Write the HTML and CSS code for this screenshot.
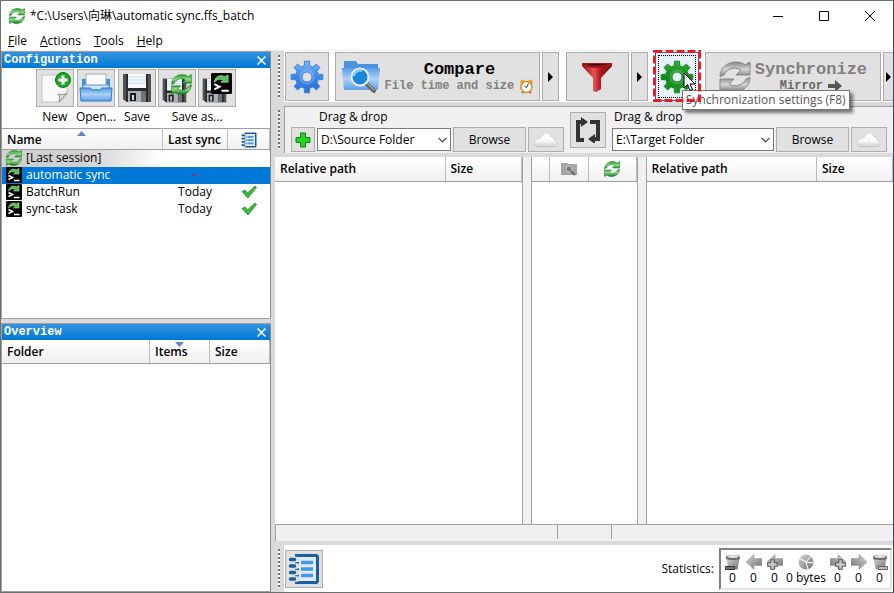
FILE: index.html
```html
<!DOCTYPE html>
<html lang="en">
<head>
    <meta charset="UTF-8">
    <meta name="viewport" content="width=device-width, initial-scale=1.0">
    <title>automatic sync.ffs_batch</title>
    <link rel="stylesheet" href="styles.css">
</head>
<body>
    <!-- shared icons -->
    <svg class="defs" aria-hidden="true">
        <defs>
            <linearGradient id="g-green" x1="0" y1="0" x2="0" y2="1">
                <stop offset="0" stop-color="#2f9a35"/><stop offset=".5" stop-color="#8fdc7c"/><stop offset="1" stop-color="#0b6f1a"/>
            </linearGradient>
            <linearGradient id="g-grey" x1="0" y1="0" x2="0" y2="1">
                <stop offset="0" stop-color="#858585"/><stop offset=".5" stop-color="#d5d5d5"/><stop offset="1" stop-color="#777"/>
            </linearGradient>
            <linearGradient id="g-blue" x1="0" y1="0" x2="0" y2="1">
                <stop offset="0" stop-color="#7db5f7"/><stop offset=".5" stop-color="#3d86e6"/><stop offset="1" stop-color="#2a6fd6"/>
            </linearGradient>
            <linearGradient id="g-gear" x1="0" y1="0" x2="0" y2="1">
                <stop offset="0" stop-color="#2fae35"/><stop offset=".5" stop-color="#128a18"/><stop offset="1" stop-color="#1b9522"/>
            </linearGradient>
            <linearGradient id="g-red" x1="0" y1="0" x2="1" y2="0">
                <stop offset="0" stop-color="#8e0f12"/><stop offset=".4" stop-color="#e45557"/><stop offset=".6" stop-color="#b5181c"/><stop offset="1" stop-color="#6d0a0c"/>
            </linearGradient>
            <linearGradient id="g-folder" x1="0" y1="0" x2="0" y2="1">
                <stop offset="0" stop-color="#5a9be0"/><stop offset=".5" stop-color="#a9d2fb"/><stop offset="1" stop-color="#5e9fe8"/>
            </linearGradient>
            <linearGradient id="g-cloud" x1="0" y1="0" x2="0" y2="1">
                <stop offset="0" stop-color="#fff"/><stop offset=".6" stop-color="#f8f8f8"/><stop offset="1" stop-color="#c9c9c9"/>
            </linearGradient>
            <linearGradient id="g-metal" x1="0" y1="0" x2="1" y2="1">
                <stop offset="0" stop-color="#d6d6d6"/><stop offset="1" stop-color="#707070"/>
            </linearGradient>
        </defs>
        <symbol id="i-sync" viewBox="0 0 32 32">
            <path d="M1 16C1 6 9 1 17 1c4 0 7 1 9 3l5-3v13H17l5-5C16 5 7 8 5 14c-1 0-3 1-4 2z" stroke-width="1"/>
            <path d="M31 16c0 10-8 15-16 15-4 0-7-1-9-3l-5 3V18h14l-5 5c6 4 15 1 17-5 1 0 3-1 4-2z" stroke-width="1"/>
        </symbol>
        <symbol id="i-gear" viewBox="-17 -17 34 34">
            <path fill-rule="evenodd" stroke-linejoin="round" stroke-width="1" d="M-2.800-11.200L-2.500-15.800 2.500-15.800 2.800-11.200 5.900-9.900 9.400-12.900 12.900-9.400 9.900-5.900 11.200-2.800 15.800-2.500 15.800 2.500 11.200 2.800 9.900 5.900 12.900 9.400 9.400 12.900 5.900 9.900 2.800 11.200 2.500 15.800 -2.500 15.800 -2.800 11.200 -5.900 9.900 -9.400 12.900 -12.900 9.400 -9.900 5.900 -11.200 2.800 -15.800 2.500 -15.800-2.500 -11.200-2.800 -9.900-5.900 -12.900-9.400 -9.400-12.900 -5.900-9.900zM0-5A5 5 0 1 0 0 5 5 5 0 1 0 0-5z"/>
            <circle r="6.500" fill="none" stroke="#fff" stroke-opacity=".2" stroke-width="2"/>
        </symbol>
        <symbol id="i-floppy" viewBox="0 0 30 30">
            <path d="M1 1h28v28H5l-4-3z" fill="#2a2b2d"/>
            <path d="M1 1h3v26l-3-1zM26 1h3v28h-3z" fill="#505256"/>
            <path d="M6 1h18v14H6z" fill="#f6f9fd"/>
            <path d="M6 4h18M6 7h18M6 10h18" stroke="#c3d6ee" stroke-width="1"/>
            <path d="M6 18h18v11H6z" fill="#aeb1b5"/>
            <path d="M8 20h6v8H8z" fill="#1b1b1b"/><path d="M10 22h2v5h-2z" fill="#ddd"/>
            <path d="M19 18h5v11h-5z" fill="#6f7276"/>
        </symbol>
        <symbol id="i-batch" viewBox="0 0 16 16">
            <rect width="16" height="16" rx="1" fill="#050505"/>
            <path d="M2.500 7C3 2.500 7 1 10.500 2.800L13 1.500V7H7.500l2-1.600C7 4 4.500 4.800 2.500 7z" fill="#4fbf55" stroke="#b5ecae" stroke-width=".5"/>
            <path d="M2.500 8.500l4 2-4 2M8 13.500h5.500" fill="none" stroke="#fff" stroke-width="1.500"/>
        </symbol>
        <symbol id="i-log" viewBox="0 0 32 32">
            <path d="M7 1h22l2 2v26l-2 2H7z" fill="#185f9f"/>
            <path d="M11 4h17v24H11z" fill="#e4eaf2"/>
            <path d="M13 9.500h12M13 16h12M13 22.500h12" stroke="#4298ea" stroke-width="3.500"/>
            <path d="M4 6.500h5M4 13h5M4 19.500h5M4 26h5" stroke="#e1e1e1" stroke-width="5.500" stroke-linecap="round"/>
            <path d="M2.500 6.500h4M2.500 13h4M2.500 19.500h4M2.500 26h4" stroke="#185f9f" stroke-width="3.500" stroke-linecap="round"/>
        </symbol>
        <symbol id="i-cloud" viewBox="0 0 24 16">
            <path d="M5 15a4 4 0 0 1-1-8c1-1 2-1 3-1 1-6 9-7 10-1 2 0 3 1 3 3 4 1 4 7 0 7z" fill="url(#g-cloud)" stroke="#c6c6c6" stroke-width=".6"/>
        </symbol>
        <symbol id="i-check" viewBox="0 0 16 14">
            <path d="M1 6.500l3-1.500 2.500 3L14 1l1.500 1.500L7 13z" fill="#3fb83f" stroke="#1f8a2a" stroke-width=".8"/>
        </symbol>
        <symbol id="i-chevron" viewBox="0 0 9 6">
            <path d="M.5.800l4 4 4-4" fill="none" stroke="#444" stroke-width="1.200"/>
        </symbol>
        <symbol id="i-close" viewBox="0 0 9 9">
            <path d="M.5.500l8 8m0-8l-8 8" fill="none" stroke="currentColor" stroke-width="1.500"/>
        </symbol>
        <symbol id="i-arrow" viewBox="0 0 16 16">
            <path d="M16 4.500H8V.5L0 8l8 7.500v-4h8z" fill="url(#g-metal)" stroke="#999" stroke-width=".6"/>
        </symbol>
        <symbol id="i-plus" viewBox="0 0 16 16">
            <path d="M5.500 1h5v4.500H15v5h-4.500V15h-5v-4.500H1v-5h4.500z"/>
        </symbol>
        <symbol id="i-bin" viewBox="0 0 16 16">
            <path d="M1.500 4h13l-2 11.500h-9z" fill="url(#g-metal)"/>
            <path d="M1 2.500C1 .5 15 .5 15 2.500v2c0 2-14 2-14 0z" fill="#6e6e6e"/>
            <ellipse cx="8" cy="2.500" rx="6" ry="1.500" fill="#e6e6e6"/>
        </symbol>
    </svg>

    <div class="window">
        <header class="titlebar">
            <svg class="icon-16 green"><use href="#i-sync"/></svg>
            <h1>*C:\Users\向琳\automatic sync.ffs_batch</h1>
            <div class="window-btns">
                <button aria-label="Minimize"><svg width="10" height="10"><path d="M0 5.500h10" stroke="#000"/></svg></button>
                <button aria-label="Maximize"><svg width="10" height="10"><path d="M.5.500h9v9h-9z" fill="none" stroke="#000"/></svg></button>
                <button aria-label="Close"><svg width="10" height="10"><path d="M0 0l10 10M10 0L0 10" stroke="#000"/></svg></button>
            </div>
        </header>

        <nav class="menubar">
            <button><u>F</u>ile</button>
            <button><u>A</u>ctions</button>
            <button><u>T</u>ools</button>
            <button><u>H</u>elp</button>
        </nav>

        <div class="workspace">
            <aside class="sidebar">
                <section class="panel config">
                    <div class="caption">
                        <h2>Configuration</h2>
                        <button aria-label="Close configuration"><svg width="9" height="9"><use href="#i-close"/></svg></button>
                    </div>
                    <div class="file-tools">
                        <div class="tool">
                            <button class="btn" id="new" aria-label="New">
                                <svg width="32" height="32" viewBox="0 0 32 32">
                                    <path d="M3 3h25v20l-8 7H3z" fill="#fafafa" stroke="#c4c4c4"/>
                                    <path d="M28 21l-8 9c1-4 1-6-1-8 3 1 6 1 9-1z" fill="#ddd" stroke="#888"/>
                                    <circle cx="24" cy="8" r="7.500" fill="#22a52a" stroke="#0d7a15"/>
                                    <path d="M24 3.500v9M19.500 8h9" stroke="#fff" stroke-width="3"/>
                                </svg>
                            </button>
                            <label for="new">New</label>
                        </div>
                        <div class="tool">
                            <button class="btn" id="open" aria-label="Open">
                                <svg width="34" height="32" viewBox="0 0 34 32">
                                    <path d="M3 7h28v12H3z" fill="#3b8be0"/>
                                    <path d="M7 2h20v16H7z" fill="#fafafa" stroke="#aaa"/>
                                    <path d="M4 13h26v5H4z" fill="#cfe3f8" stroke="#5a9be0"/>
                                    <path d="M1 16h10l2 2h8l2-2h10l-1 13H2z" fill="url(#g-folder)" stroke="#3379cc"/>
                                </svg>
                            </button>
                            <label for="open">Open...</label>
                        </div>
                        <div class="tool">
                            <button class="btn" id="save" aria-label="Save"><svg width="30" height="30"><use href="#i-floppy"/></svg></button>
                            <label for="save">Save</label>
                        </div>
                        <div class="tool">
                            <div class="tool-pair">
                                <button class="btn" id="save-as" aria-label="Save as">
                                    <svg width="32" height="32" viewBox="0 0 32 32">
                                        <use href="#i-floppy" x="1" y="6" width="25" height="25"/>
                                        <use href="#i-sync" class="green" x="10" y="2" width="21" height="21"/>
                                    </svg>
                                </button>
                                <button class="btn" aria-label="Save as batch job">
                                    <svg width="32" height="32" viewBox="0 0 32 32">
                                        <use href="#i-floppy" x="1" y="6" width="25" height="25"/>
                                        <use href="#i-batch" x="10" y="1" width="21" height="21"/>
                                    </svg>
                                </button>
                            </div>
                            <label for="save-as">Save as...</label>
                        </div>
                    </div>
                    <table class="grid config-list">
                        <thead>
                            <tr>
                                <th>Name<svg class="sort" width="9" height="5"><path d="M0 5l4.500-5L9 5z" fill="#5f7fd0"/></svg></th>
                                <th class="col-sync">Last sync</th>
                                <th class="col-log"><svg class="icon-16"><use href="#i-log"/></svg></th>
                            </tr>
                        </thead>
                        <tbody>
                            <tr class="session">
                                <td><span class="cell"><svg class="icon-16 green"><use href="#i-sync"/></svg>[Last session]</span></td><td></td><td></td>
                            </tr>
                            <tr class="selected">
                                <td><span class="cell"><svg class="icon-16"><use href="#i-batch"/></svg>automatic sync</span></td><td><span class="dash">–</span></td><td></td>
                            </tr>
                            <tr>
                                <td><span class="cell"><svg class="icon-16"><use href="#i-batch"/></svg>BatchRun</span></td><td>Today</td><td><svg class="check"><use href="#i-check"/></svg></td>
                            </tr>
                            <tr>
                                <td><span class="cell"><svg class="icon-16"><use href="#i-batch"/></svg>sync-task</span></td><td>Today</td><td><svg class="check"><use href="#i-check"/></svg></td>
                            </tr>
                        </tbody>
                    </table>
                </section>

                <section class="panel overview">
                    <div class="caption">
                        <h2>Overview</h2>
                        <button aria-label="Close overview"><svg width="9" height="9"><use href="#i-close"/></svg></button>
                    </div>
                    <table class="grid">
                        <thead>
                            <tr>
                                <th>Folder</th>
                                <th class="col-60">Items<svg class="sort" width="9" height="5"><path d="M0 0l4.500 5L9 0z" fill="#5f7fd0"/></svg></th>
                                <th class="col-60">Size</th>
                            </tr>
                        </thead>
                    </table>
                </section>
            </aside>

            <main class="main">
                <div class="dock">
                    <div class="grip"></div>
                    <div class="toolbar">
                        <button class="btn square" aria-label="Comparison settings">
                            <svg width="34" height="34" fill="url(#g-blue)" stroke="#3f82d8"><use href="#i-gear"/></svg>
                        </button>
                        <button class="btn action compare">
                            <svg width="40" height="34" viewBox="0 0 40 34">
                                <path d="M3 4V1h12l2 3h20v10H3z" fill="#4d92dc"/>
                                <path d="M1 8h38l-2 22H3z" fill="url(#g-folder)"/>
                                <path d="M25 23l8 8" stroke="#666" stroke-width="4" stroke-linecap="round"/>
                                <path d="M26 23l7 7" stroke="#ccc" stroke-width="1"/>
                                <circle cx="19" cy="17" r="8.500" fill="#1c86dc" stroke="#e8eef4" stroke-width="2"/>
                                <path d="M13 16a6 6 0 0 1 8-5" stroke="#8fd0ff" stroke-width="2" fill="none"/>
                            </svg>
                            <span class="action-text">
                                <span class="action-title">Compare</span>
                                <span class="action-sub">File time and size
                                    <svg width="15" height="16" viewBox="0 0 15 16">
                                        <circle cx="3.500" cy="4" r="2.500" fill="#e8a93a"/><circle cx="11.500" cy="4" r="2.500" fill="#e8a93a"/>
                                        <path d="M3 15l2-2M12 15l-2-2" stroke="#a8672a" stroke-width="2"/>
                                        <circle cx="7.500" cy="9" r="5.500" fill="#fff" stroke="#d8902c" stroke-width="1.500"/>
                                        <path d="M9.500 5.500l-2 4-2-1.500" stroke="#333" fill="none"/>
                                    </svg>
                                </span>
                            </span>
                        </button>
                        <button class="btn drop" aria-label="Comparison variants"><svg width="5" height="10"><path d="M0 0l5 5-5 5z"/></svg></button>
                        <button class="btn filter" aria-label="Filter">
                            <svg width="30" height="30" viewBox="0 0 30 30">
                                <path d="M0 1v3l11 12v13l3 1 5-3V16L30 4V1z" fill="url(#g-red)"/>
                                <path d="M0 1h30v2c-6 4-24 4-30 0z" fill="#a3171b"/>
                                <path d="M4 2h22c-5 2-17 2-22 0z" fill="#4d0506"/>
                            </svg>
                        </button>
                        <button class="btn drop" aria-label="Filter options"><svg width="5" height="10"><path d="M0 0l5 5-5 5z"/></svg></button>
                        <div class="sync-settings">
                            <button class="btn square hot" aria-describedby="tip" aria-label="Synchronization settings">
                                <svg width="34" height="34" fill="url(#g-gear)" stroke="#158a1b"><use href="#i-gear"/></svg>
                            </button>
                            <div class="tooltip" id="tip" role="tooltip">Synchronization settings (F8)</div>
                            <svg class="highlight" width="48" height="52"><path d="M1.500 1.500h45v49h-45z" fill="none" stroke="#ed1c24" stroke-width="3" stroke-dasharray="8 3"/></svg>
                            <svg class="cursor" width="13" height="20" viewBox="0 0 13 20"><path d="M1 1v15l3.500-3.500L7 18.500l2.500-1L7 12h5z" fill="#fff" stroke="#000"/></svg>
                        </div>
                        <button class="btn action sync" disabled>
                            <svg class="grey" width="32" height="32"><use href="#i-sync"/></svg>
                            <span class="action-text">
                                <span class="action-title">Synchronize</span>
                                <span class="action-sub">Mirror
                                    <svg width="14" height="12" viewBox="0 0 14 12"><path d="M0 4h7V0l7 6-7 6V8H0z" fill="#555"/></svg>
                                </span>
                            </span>
                        </button>
                        <button class="btn drop last" aria-label="Synchronization variants"><svg width="5" height="10"><path d="M0 0l5 5-5 5z"/></svg></button>
                    </div>
                </div>

                <div class="dock">
                    <div class="grip"></div>
                    <div class="folders">
                        <div class="side">
                            <label for="left-path">Drag &amp; drop</label>
                            <div class="path">
                                <button class="btn add" aria-label="Add folder pair">
                                    <svg width="16" height="16" fill="#27d321" stroke="#15801a"><use href="#i-plus"/></svg>
                                </button>
                                <div class="combo">
                                    <select id="left-path"><option>D:\Source Folder</option></select>
                                    <svg width="9" height="6"><use href="#i-chevron"/></svg>
                                </div>
                                <button class="btn browse">Browse</button>
                                <button class="btn cloud" aria-label="Online storage"><svg width="24" height="16"><use href="#i-cloud"/></svg></button>
                            </div>
                        </div>
                        <button class="btn swap" aria-label="Swap sides">
                            <svg width="26" height="26" viewBox="0 0 26 26" fill="none" stroke="#333" stroke-width="4">
                                <path d="M9 23H3V5h4M15 5h8v17h-4"/>
                                <path d="M6 0l7 5-7 5zM20 17l-7 5 7 5z" fill="#333" stroke="none"/>
                            </svg>
                        </button>
                        <div class="side right">
                            <label for="right-path">Drag &amp; drop</label>
                            <div class="path">
                                <div class="combo">
                                    <select id="right-path"><option>E:\Target Folder</option></select>
                                    <svg width="9" height="6"><use href="#i-chevron"/></svg>
                                </div>
                                <button class="btn browse">Browse</button>
                                <button class="btn cloud" aria-label="Online storage"><svg width="24" height="16"><use href="#i-cloud"/></svg></button>
                            </div>
                        </div>
                    </div>
                </div>

                <div class="grids">
                    <div class="pane">
                        <table class="grid">
                            <thead><tr><th>Relative path</th><th class="col-size">Size</th></tr></thead>
                        </table>
                    </div>
                    <div class="pane center">
                        <table class="grid">
                            <thead>
                                <tr>
                                    <th class="col-check"></th>
                                    <th class="col-cat">
                                        <svg width="16" height="14" viewBox="0 0 16 14"><path d="M0 1h6l1 1h9v11H0z" fill="#a5a5a5"/><circle cx="8" cy="7" r="3" fill="#777" stroke="#ccc"/><path d="M10 9l4 4" stroke="#666" stroke-width="2"/></svg>
                                    </th>
                                    <th class="col-act"><svg class="icon-16 green"><use href="#i-sync"/></svg></th>
                                </tr>
                            </thead>
                        </table>
                    </div>
                    <div class="pane">
                        <table class="grid">
                            <thead><tr><th>Relative path</th><th class="col-size">Size</th></tr></thead>
                        </table>
                    </div>
                </div>
                <div class="statusbar"><span></span><span></span><span></span></div>

                <div class="dock bottom">
                    <div class="grip"></div>
                    <div class="footer">
                        <button class="btn log" aria-label="Show log"><svg width="32" height="32"><use href="#i-log"/></svg></button>
                        <span class="stats-label">Statistics:</span>
                        <ul class="stats">
                            <li><svg class="icon-16"><use href="#i-bin"/><path d="M.5 12.500h9v3h-9z" fill="#777" stroke="#333"/></svg>0</li>
                            <li><svg class="icon-16"><use href="#i-arrow"/></svg>0</li>
                            <li><svg class="icon-16"><use href="#i-arrow"/><use href="#i-plus" width="11" height="11" y="5" fill="#ccc" stroke="#555" stroke-width="1.500"/></svg>0</li>
                            <li class="bytes"><svg class="icon-16" viewBox="0 0 16 16"><circle cx="8" cy="8" r="7.500" fill="url(#g-metal)"/><path d="M1 4l7 4 5-6M8 8l2 7M8 8l7 1" stroke="#fff" fill="none"/></svg>0 bytes</li>
                            <li><svg class="icon-16" viewBox="0 0 16 16"><use href="#i-arrow" width="16" height="16" transform="matrix(-1 0 0 1 16 0)"/><use href="#i-plus" width="11" height="11" x="5" y="5" fill="#ccc" stroke="#555" stroke-width="1.500"/></svg>0</li>
                            <li><svg class="icon-16" viewBox="0 0 16 16"><use href="#i-arrow" width="16" height="16" transform="matrix(-1 0 0 1 16 0)"/></svg>0</li>
                            <li><svg class="icon-16"><use href="#i-bin"/><path d="M6.500 12.500h9v3h-9z" fill="#bbb" stroke="#666"/></svg>0</li>
                        </ul>
                    </div>
                </div>
            </main>
        </div>
    </div>
</body>
</html>
```
FILE: styles.css
```css
:root {
    --line: #a0a0a0;
    --frame: #dadada;
    --face: #e1e1e1;
    --blue: #0078d7;
}

* {
    box-sizing: border-box;
}

body {
    margin: 0;
    font: 12px/16px "Open Sans", "Noto Sans CJK SC", sans-serif;
    color: #000;
    background: #fff;
}

button, select {
    font: inherit;
    color: inherit;
    padding: 0;
    margin: 0;
}

svg {
    display: block;
    flex: none;
}

h1, h2 {
    margin: 0;
    font: inherit;
}

.defs {
    position: absolute;
    width: 0;
    height: 0;
}

.icon-16 {
    width: 16px;
    height: 16px;
}

.green {
    fill: url(#g-green);
    stroke: #15802a;
}

.grey {
    fill: url(#g-grey);
    stroke: #888;
}

.window {
    display: flex;
    flex-direction: column;
    height: 100vh;
    border: 1px solid #6b7074;
    border-right-color: #34495a;
    overflow: hidden;
}

/* title and menu */
.titlebar {
    display: flex;
    align-items: center;
    height: 30px;
    padding-left: 8px;
    gap: 5px;
}

.titlebar h1 {
    flex: 1;
}

.window-btns {
    display: flex;
}

.window-btns button {
    display: flex;
    justify-content: center;
    align-items: center;
    width: 46px;
    height: 28px;
    border: 0;
    background: none;
}

.menubar {
    display: flex;
    height: 20px;
    padding-left: 7px;
    gap: 13px;
    border-bottom: 1px solid #f0f0f0;
}

.menubar button {
    border: 0;
    background: none;
}

.workspace {
    flex: 1;
    display: flex;
    gap: 4px;
    min-height: 0;
    background: var(--frame);
}

/* left panels */
.sidebar {
    display: flex;
    flex-direction: column;
    gap: 4px;
    width: 270px;
    flex: none;
}

.panel {
    background: #fff;
    border: 1px solid var(--line);
    border-right-color: #8c8c8c;
}

.config {
    height: 268px;
}

.overview {
    flex: 1;
}

.caption {
    display: flex;
    justify-content: space-between;
    align-items: center;
    height: 16px;
    padding: 0 4px 0 2px;
    color: #fff;
    background: linear-gradient(#3393df, var(--blue));
}

.caption h2 {
    font: bold 12px/16px "Liberation Mono", monospace;
}

.caption button {
    border: 0;
    background: none;
    color: #fff;
}

.btn {
    display: flex;
    justify-content: center;
    align-items: center;
    flex: none;
    border: 1px solid #adadad;
    background: var(--face);
}

.file-tools {
    display: flex;
    justify-content: center;
    gap: 2px;
    height: 60px;
    padding-top: 1px;
}

.tool {
    display: flex;
    flex-direction: column;
    align-items: center;
    gap: 2px;
}

.tool .btn {
    min-width: 38px;
    height: 38px;
}

.tool-pair {
    display: flex;
    gap: 2px;
}

/* tables */
.grid {
    width: 100%;
    table-layout: fixed;
    border-collapse: collapse;
}

.grid th {
    position: relative;
    height: 23px;
    padding: 1px 5px 0;
    text-align: left;
    font-weight: 600;
    background: linear-gradient(#fff, #f0f0f0);
    border-right: 1px solid #bcbcbc;
    border-bottom: 1px solid var(--line);
}

.grid td {
    height: 17px;
    padding: 0;
    line-height: 16px;
    text-align: center;
}

.grid td svg, .grid th > svg {
    margin: 0 auto;
}

.grid .sort {
    position: absolute;
    top: 2px;
    left: 50%;
    margin-left: -5px;
}

.config-list {
    border-top: 1px solid var(--line);
}

.config-list th {
    height: 21px;
}

.col-sync {
    width: 65px;
}

.col-log {
    width: 42px;
}

.col-60 {
    width: 60px;
}

.cell {
    display: flex;
    align-items: center;
    gap: 4px;
    padding-left: 4px;
}

.grid .cell svg {
    margin: 0;
}

.check {
    width: 16px;
    height: 14px;
}

.session td:first-child {
    background: linear-gradient(to right, #d0d0d0 50%, #fff);
}

.selected {
    color: #fff;
    background: var(--blue);
}

.dash {
    color: #e0202c;
}

/* right side */
.main {
    flex: 1;
    display: flex;
    flex-direction: column;
    min-width: 0;
}

.dock {
    display: flex;
    margin-bottom: 4px;
}

.grip {
    width: 9px;
    flex: none;
    margin: 4px 0;
    background: repeating-linear-gradient(#707070 0 2px, #fff 2px 4px) 3px 0 / 2px 100% no-repeat;
}

.toolbar {
    flex: 1;
    display: flex;
    height: 51px;
    padding: 1px 0 1px 1px;
    gap: 2px;
    min-width: 0;
    background: #fff;
}

.square {
    width: 44px;
    height: 49px;
}

.action {
    display: flex;
    gap: 4px;
    min-width: 0;
}

.compare {
    flex: 205;
    margin-left: 4px;
}

.sync {
    flex: 176;
    margin-left: 4px;
    color: #808080;
}

.action-text {
    display: flex;
    flex-direction: column;
    align-items: center;
}

.action-title {
    font: bold 17px/18px "Liberation Mono", monospace;
}

.action-sub {
    display: flex;
    align-items: center;
    gap: 5px;
    font: bold 12px/14px "Liberation Mono", monospace;
    color: #808080;
}

.sync .action-sub {
    color: #666;
}

.action-sub svg {
    margin: -1px 0;
}

.drop {
    width: 17px;
}

.drop.last {
    width: 10px;
    border-right: 0;
}

.filter {
    width: 63px;
    margin-left: 5px;
}

.sync-settings {
    position: relative;
    margin-left: 5px;
}

.hot {
    border-color: var(--blue);
    background: #e5f1fb;
    outline: 1px dotted #000;
    outline-offset: -4px;
}

.highlight {
    position: absolute;
    top: -2px;
    left: -2px;
    z-index: 3;
}

.cursor {
    position: absolute;
    top: 20px;
    left: 28px;
    z-index: 4;
}

.tooltip {
    position: absolute;
    top: 38px;
    left: 27px;
    z-index: 2;
    padding: 1px 3px;
    white-space: nowrap;
    color: #575757;
    background: #fff;
    border: 1px solid #767676;
    box-shadow: 3px 3px 3px rgba(0, 0, 0, 0.5);
}

.folders {
    flex: 1;
    display: flex;
    align-items: flex-start;
    gap: 6px;
    height: 47px;
    padding: 2px 6px 0 6px;
    min-width: 0;
    background: #f0f0f0;
    border: 1px solid var(--line);
    border-width: 1px 0 0 1px;
}

.side {
    flex: 272;
    min-width: 0;
}

.side label {
    display: block;
    padding-left: 28px;
}

.side.right {
    flex: 274;
}

.right label {
    padding-left: 2px;
}

.path {
    display: flex;
    gap: 2px;
    height: 25px;
    margin-top: 2px;
}

.add {
    width: 24px;
}

.combo {
    position: relative;
    flex: 1;
    min-width: 0;
}

.combo select {
    width: 100%;
    height: 23px;
    margin-top: 1px;
    padding: 0 18px 0 3px;
    appearance: none;
    background: #fff;
    border: 1px solid #7a7a7a;
    border-radius: 0;
}

.combo svg {
    position: absolute;
    right: 4px;
    top: 10px;
    pointer-events: none;
}

.browse {
    width: 73px;
}

.cloud {
    width: 36px;
}

.swap {
    width: 36px;
    height: 36px;
    margin-top: 3px;
}

.grids {
    flex: 1;
    display: flex;
    gap: 8px;
    min-height: 0;
    background: #f0f0f0;
}

.pane {
    flex: 247;
    background: #fff;
    border-right: 1px solid var(--line);
}

.pane + .pane {
    border-left: 1px solid var(--line);
}

.pane:last-child {
    border-right: 0;
}

.pane.center {
    flex: none;
    width: 107px;
}

.pane .grid th {
    height: 24px;
}

.col-size {
    width: 76px;
}

.col-check {
    width: 18px;
}

.col-cat {
    width: 39px;
}

.statusbar {
    display: flex;
    height: 17px;
    margin-bottom: 4px;
    background: #f0f0f0;
    border-top: 1px solid var(--line);
    border-left: 1px solid var(--line);
}

.statusbar span {
    flex: 281;
    margin-bottom: 2px;
    border-right: 1px solid var(--line);
}

.statusbar span:nth-child(2) {
    flex: none;
    width: 54px;
}

.statusbar span:last-child {
    border: 0;
}

.dock.bottom {
    margin: 0;
}

.footer {
    flex: 1;
    display: flex;
    align-items: center;
    height: 47px;
    padding: 0 1px;
    background: #fff;
}

.log {
    width: 38px;
    height: 38px;
}

.stats-label {
    margin-left: auto;
    padding-right: 5px;
}

.stats {
    display: flex;
    margin: 0;
    padding: 4px 0 2px 1px;
    list-style: none;
    border: 2px solid #808080;
    border-right-color: #e3e3e3;
    border-bottom-color: #e3e3e3;
}

.stats li {
    display: flex;
    flex-direction: column;
    align-items: center;
    width: 21px;
    white-space: nowrap;
}

.stats .bytes {
    width: 42px;
}
```
